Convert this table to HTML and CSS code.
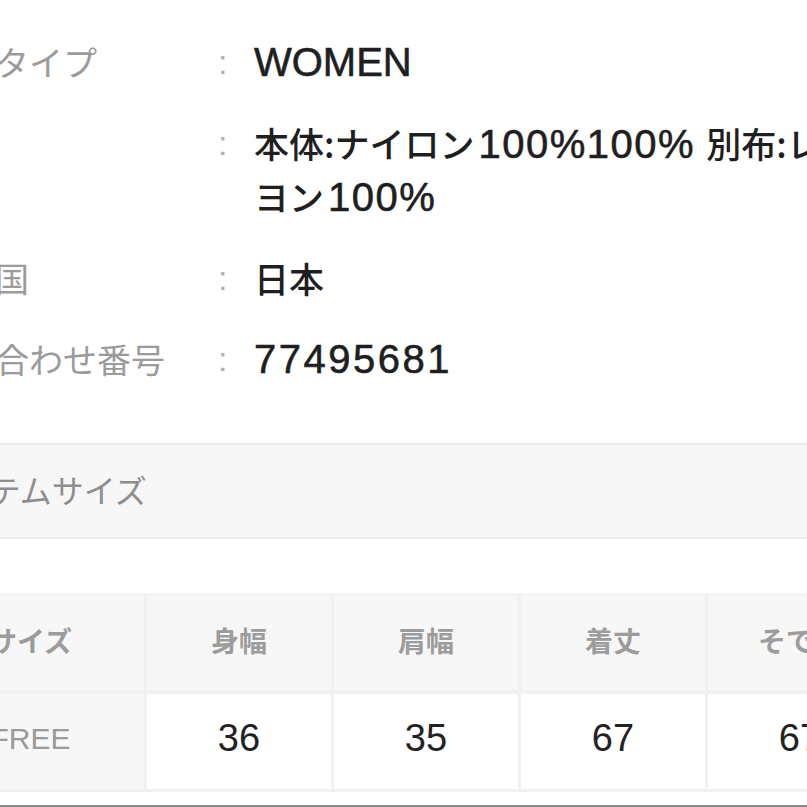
FILE: index.html
```html
<!DOCTYPE html>
<html lang="ja">
<head>
<meta charset="utf-8">
<title>商品情報</title>
<link rel="stylesheet" href="styles.css">
</head>
<body>
<div class="page">
  <section class="spec">
    <div class="row">
      <div class="label">性別タイプ</div>
      <div class="colon">:</div>
      <div class="value">WOMEN</div>
    </div>
    <div class="row">
      <div class="label">素材</div>
      <div class="colon">:</div>
      <div class="value"><span class="ja">本体:ナイロン</span><span class="pct">100%100%</span> <span class="ja">別布:レーヨン</span><span class="pct">100%</span></div>
    </div>
    <div class="row">
      <div class="label">原産国</div>
      <div class="colon">:</div>
      <div class="value ja">日本</div>
    </div>
    <div class="row">
      <div class="label">お問合わせ番号</div>
      <div class="colon">:</div>
      <div class="value num">77495681</div>
    </div>
  </section>

  <div class="band">アイテムサイズ</div>

  <div class="size-table">
    <div class="th first">サイズ</div>
    <div class="th">身幅</div>
    <div class="th">肩幅</div>
    <div class="th">着丈</div>
    <div class="th">そで丈</div>
    <div class="td first">FREE</div>
    <div class="td">36</div>
    <div class="td">35</div>
    <div class="td">67</div>
    <div class="td">67</div>
  </div>

  <div class="rule"></div>
</div>
</body>
</html>
```

FILE: styles.css
```css
html, body {
  margin: 0;
  padding: 0;
  background: #ffffff;
  overflow: hidden;
}

.page {
  margin-left: -73px;
  width: 1000px;
  font-family: "Noto Sans CJK JP", sans-serif;
}

.spec {
  display: flex;
  flex-direction: column;
  gap: 29px;
  padding-top: 36px;
}

.row {
  display: grid;
  grid-template-columns: 289px 38px 625px;
}

.label {
  font-size: 34px;
  line-height: 52px;
  color: #9b9b9b;
  white-space: nowrap;
}

.colon {
  font-family: "Liberation Sans", sans-serif;
  font-size: 34px;
  line-height: 52px;
  color: #b0b0b0;
  padding-left: 2px;
}

.value {
  font-family: "Liberation Sans", "Noto Sans CJK JP", sans-serif;
  font-size: 40px;
  line-height: 52px;
  color: #1f1f1f;
  -webkit-text-stroke: 0.6px #1f1f1f;
}

.value .ja,
.value.ja {
  font-family: "Noto Sans CJK JP", sans-serif;
  font-size: 35px;
  font-weight: 500;
  -webkit-text-stroke: 0;
}

.value .pct {
  letter-spacing: 1.5px;
  margin-left: 4px;
}

.value.num {
  letter-spacing: 2.5px;
}

.band {
  margin-top: 58px;
  height: 88px;
  background: #f7f7f7;
  border-top: 2px solid #ebebeb;
  border-bottom: 2px solid #ebebeb;
  display: flex;
  align-items: center;
  padding-bottom: 4px;
  box-sizing: content-box;
  font-size: 32px;
  color: #8e8e8e;
}

.size-table {
  margin-top: 55px;
  display: grid;
  grid-template-columns: 217px repeat(4, 184px);
  grid-auto-rows: 95px;
  gap: 4px 3px;
  background: #f1f1f1;
  padding-bottom: 3px;
  border-top: 1px solid #ececec;
}

.th,
.td {
  display: flex;
  align-items: center;
  justify-content: center;
  padding-bottom: 6px;
}

.th {
  background: #f7f7f7;
  font-size: 28px;
  font-weight: 700;
  color: #9c9c9c;
}

.td {
  background: #ffffff;
  font-family: "Liberation Sans", sans-serif;
  font-size: 38px;
  color: #222222;
}

.th.first,
.td.first {
  padding-right: 10px;
}

.td.first {
  background: #f7f7f7;
  font-size: 30px;
  color: #9a9a9a;
}

.rule {
  margin-top: 13px;
  border-top: 3px solid #888888;
}
```
